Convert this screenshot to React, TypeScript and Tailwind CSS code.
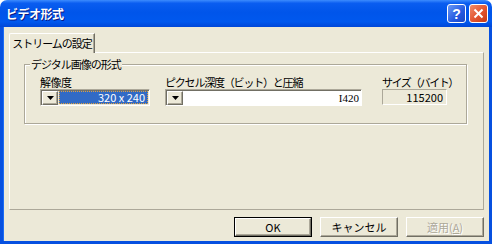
import React from 'react'

const jp = "font-['MS_UI_Gothic','Noto_Sans_CJK_JP',sans-serif]"

function DropButton() {
  return (
    <div className="w-[16px] h-full flex items-center justify-center bg-[#ECE9D8] border border-t-white border-l-white border-b-[#716F64] border-r-[#716F64] shadow-[inset_-1px_-1px_0_#ACA899]">
      <svg width="7" height="4" viewBox="0 0 7 4">
        <path d="M0 0h7L3.5 4z" fill="#000" />
      </svg>
    </div>
  )
}

function DialogButton({ label, isDefault, disabled }: { label: React.ReactNode; isDefault?: boolean; disabled?: boolean }) {
  return (
    <div className={`w-[78px] h-[20px] ${isDefault ? 'border border-black' : ''}`}>
      <div className="w-full h-full flex items-center justify-center bg-[#ECE9D8] border border-t-white border-l-white border-b-[#716F64] border-r-[#716F64] shadow-[inset_-1px_-1px_0_#ACA899]">
        <span className={`text-[11px] leading-none ${disabled ? 'text-[#ACA899] [text-shadow:1px_1px_0_#fff]' : 'text-black'}`}>{label}</span>
      </div>
    </div>
  )
}

export default function App() {
  return (
    <div className={`w-[500px] h-[249px] bg-white ${jp}`}>
      <div className="w-[492px] h-[244px] flex flex-col">
        {/* Title bar */}
        <div className="h-[27px] rounded-t-[7px] flex items-center pl-[6px] pr-[4px] bg-[linear-gradient(to_bottom,#3C8CFE_0%,#0A5DF0_12%,#0055EA_45%,#0058EE_80%,#0047D8_100%)]">
          <span className="text-white font-bold text-[12px] tracking-[-0.5px] [text-shadow:1px_1px_0_#0A1883]">ビデオ形式</span>
          <div className="ml-auto flex gap-[3px]">
            <div className="w-[19px] h-[19px] rounded-[3px] border border-white flex items-center justify-center bg-[linear-gradient(135deg,#6A98F6,#2459E0_60%,#1C47C4)]">
              <span className="text-white font-bold text-[14px] leading-none font-['Liberation_Sans',sans-serif]">?</span>
            </div>
            <div className="w-[19px] h-[19px] rounded-[3px] border border-white flex items-center justify-center bg-[linear-gradient(135deg,#F08C6A,#E2532E_55%,#C43A16)]">
              <svg width="11" height="11" viewBox="0 0 11 11">
                <path d="M1.5 1.5l8 8M9.5 1.5l-8 8" stroke="#fff" strokeWidth="2" />
              </svg>
            </div>
          </div>
        </div>

        {/* Body */}
        <div className="flex-1 flex flex-col bg-[#ECE9D8] border-x-[3px] border-b-[3px] border-[#0650E0] shadow-[inset_1px_0_0_#1C6CF5]">
          <div className="pl-[6px] pr-[5px] pt-[6px] flex flex-col">
            {/* Tab */}
            <div className="relative z-10 w-[86px] h-[20px] -mb-[1px] bg-[#ECE9D8] border-t border-l border-t-white border-l-white border-r border-r-[#716F64] rounded-tl-[2px] shadow-[inset_-1px_0_0_#ACA899] flex items-center justify-center">
              <span className="text-[11px] leading-none tracking-[-1px] text-black whitespace-nowrap">ストリームの設定</span>
            </div>
            {/* Panel */}
            <div className="h-[158px] border border-t-white border-l-white border-b-[#ACA899] border-r-[#ACA899] pl-[14px] pt-[11px]">
              <div className="relative w-[443px] h-[60px] border border-[#ACA899] shadow-[inset_1px_1px_0_#fff,1px_1px_0_#fff] pl-[15px] pt-[11px] flex gap-[15px]">
                <span className="absolute -top-[7px] left-[5px] px-[1px] bg-[#ECE9D8] text-[11px] leading-[13px] tracking-[-1px] text-black whitespace-nowrap">デジタル画像の形式</span>

                <div className="flex flex-col w-[110px]">
                  <span className="h-[13px] text-[11px] leading-[13px] text-black tracking-[-0.5px] whitespace-nowrap">解像度</span>
                  <div className="h-[17px] flex border border-t-[#ACA899] border-l-[#ACA899] border-b-white border-r-white shadow-[inset_1px_1px_0_#716F64] pt-[1px] pl-[1px]">
                    <DropButton />
                    <div className="flex-1 ml-[1px] mr-[1px] mb-[1px] bg-[#316AC5] border border-dotted border-[#E0A040] flex items-center justify-end pr-[2px]">
                      <span className="text-white text-[11px] leading-none whitespace-nowrap">320 x 240</span>
                    </div>
                  </div>
                </div>

                <div className="flex flex-col w-[197px]">
                  <span className="h-[13px] text-[11px] leading-[13px] text-black tracking-[-1.2px] whitespace-nowrap">ピクセル深度（ビット）と圧縮</span>
                  <div className="h-[17px] flex bg-white border border-t-[#ACA899] border-l-[#ACA899] border-b-white border-r-white shadow-[inset_1px_1px_0_#716F64] pt-[1px] pl-[1px]">
                    <DropButton />
                    <div className="flex-1 flex items-center justify-end pr-[2px]">
                      <span className="text-black text-[11px] leading-none font-['Liberation_Serif',serif]">I420</span>
                    </div>
                  </div>
                </div>

                <div className="flex flex-col w-[65px] ml-[5px]">
                  <span className="h-[13px] text-[11px] leading-[13px] text-black tracking-[-1.5px] whitespace-nowrap">サイズ（バイト）</span>
                  <div className="h-[16px] flex items-center justify-end pr-[3px] border border-t-[#ACA899] border-l-[#ACA899] border-b-white border-r-white">
                    <span className="text-black text-[11px] leading-none">115200</span>
                  </div>
                </div>
              </div>
            </div>

            {/* Buttons */}
            <div className="mt-[7px] flex justify-end gap-[8px]">
              <DialogButton label="OK" isDefault />
              <DialogButton label="キャンセル" />
              <DialogButton label={<>適用(<span className="underline">A</span>)</>} disabled />
            </div>
          </div>
        </div>
      </div>
    </div>
  )
}
